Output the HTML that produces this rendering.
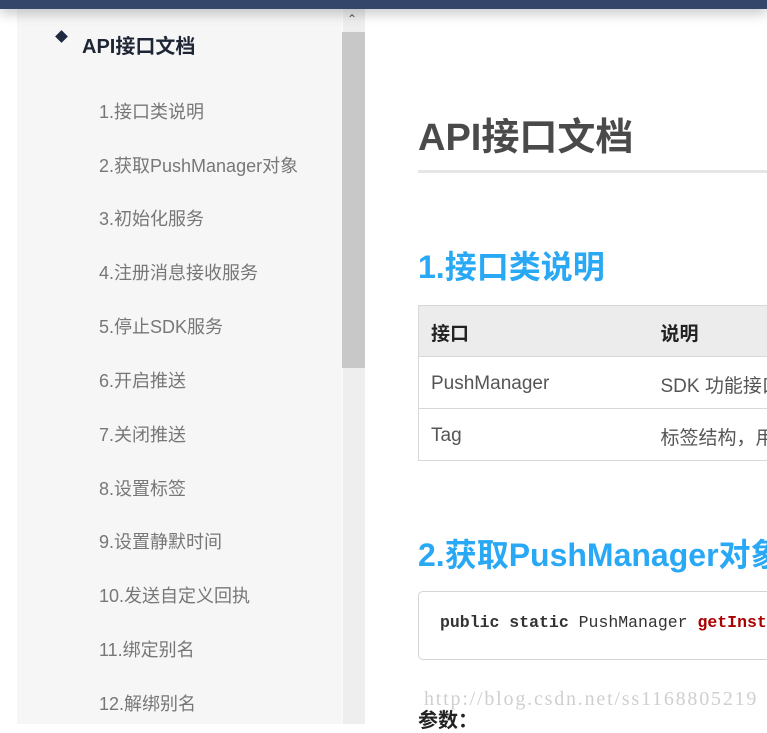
<!DOCTYPE html>
<html><head><meta charset="utf-8"><style>
*{margin:0;padding:0;box-sizing:border-box}
body{width:767px;height:724px;overflow:hidden;background:#fff;position:relative;font-family:"Liberation Sans","Noto Sans CJK SC",sans-serif}
.top{position:absolute;left:0;top:0;width:767px;height:9px;background:#34476a;box-shadow:0 2px 14px rgba(0,0,0,.35);z-index:3}
.side{position:absolute;left:17px;top:9px;width:325px;height:715px;background:#f6f6f6}
.sb{position:absolute;left:342px;top:9px;width:23px;height:715px;background:#eeeeee;border-left:1px solid #fafafa}
.thumb{position:absolute;left:342px;top:32px;width:23px;height:336px;background:#c8c8c8}
.arr{position:absolute;left:347px;top:12px;font-size:12px;color:#555}
.dia{position:absolute;left:57px;top:32px;width:9px;height:9px;background:#1e2a40;transform:rotate(45deg)}
.st{position:absolute;left:82px;top:30px;font-size:20px;font-weight:bold;color:#1e2535}
.it{position:absolute;left:99px;font-size:18px;color:#777;line-height:24px}
.h1{position:absolute;left:418px;top:106px;font-size:38px;font-weight:bold;color:#4a4a4a}
.rule{position:absolute;left:418px;top:170px;width:349px;height:3px;background:#e6e6e6}
.h2{position:absolute;left:418px;font-size:32px;font-weight:bold;color:#29a8f5}
table{position:absolute;left:418px;top:305px;border-collapse:collapse;width:400px;font-size:19px}
td{border-top:1px solid #d8d8d8;border-bottom:1px solid #d8d8d8;height:52px;padding-left:12px;color:#555;vertical-align:middle;padding-top:3px}
td:first-child{border-left:1px solid #d8d8d8}
tr:first-child td{background:#ececec;font-weight:bold;color:#222;height:51px}
.code{position:absolute;left:418px;top:591px;width:380px;height:69px;border:1px solid #d4d4d4;border-radius:5px;background:#fff;font-family:"Liberation Mono",monospace;font-size:16.5px;padding:21px 0 0 21px;color:#333;white-space:nowrap}
.wm{position:absolute;left:424px;top:688px;font-family:"Liberation Serif",serif;font-size:20px;letter-spacing:1.8px;color:#cfcfcf;white-space:nowrap}
.p{position:absolute;left:418px;top:704px;font-size:20px;font-weight:bold;color:#222}
</style></head><body>
<div class="top"></div>
<div class="side"></div>
<div class="sb"></div><div class="thumb"></div><div class="arr">&#8963;</div>
<div class="dia"></div><div class="st">API接口文档</div>
<div class="it" style="top:100px">1.接口类说明</div>
<div class="it" style="top:154px">2.获取PushManager对象</div>
<div class="it" style="top:207px">3.初始化服务</div>
<div class="it" style="top:261px">4.注册消息接收服务</div>
<div class="it" style="top:315px">5.停止SDK服务</div>
<div class="it" style="top:369px">6.开启推送</div>
<div class="it" style="top:423px">7.关闭推送</div>
<div class="it" style="top:477px">8.设置标签</div>
<div class="it" style="top:530px">9.设置静默时间</div>
<div class="it" style="top:584px">10.发送自定义回执</div>
<div class="it" style="top:638px">11.绑定别名</div>
<div class="it" style="top:692px">12.解绑别名</div>
<div class="h1">API接口文档</div>
<div class="rule"></div>
<div class="h2" style="top:242px">1.接口类说明</div>
<table><tr><td style="width:230px">接口</td><td>说明</td></tr>
<tr><td>PushManager</td><td>SDK 功能接口</td></tr>
<tr><td>Tag</td><td>标签结构，用于</td></tr></table>
<div class="h2" style="top:530px;white-space:nowrap">2.获取PushManager对象</div>
<div class="code"><b>public static</b> PushManager <b style="color:#a00">getInstance</b></div>
<div class="p">参数：</div>
<div class="wm">http://blog.csdn.net/ss1168805219</div>
</body></html>
